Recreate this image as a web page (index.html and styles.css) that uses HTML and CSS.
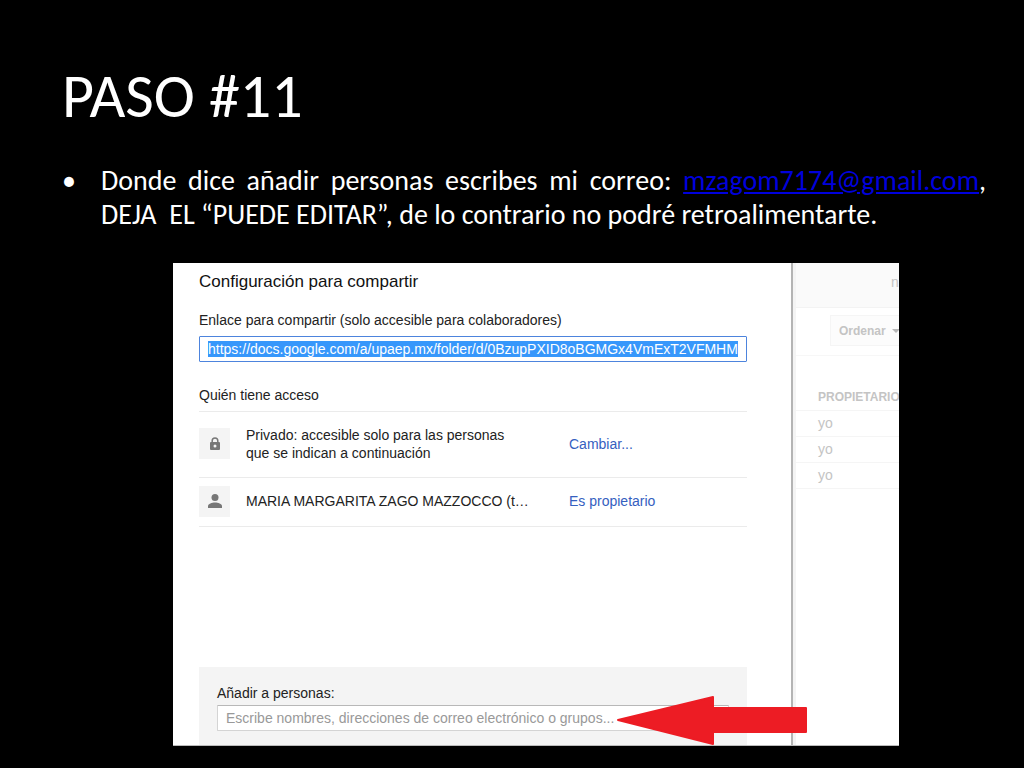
FILE: index.html
```html
<!DOCTYPE html>
<html lang="es">
<head>
  <meta charset="UTF-8">
  <meta name="viewport" content="width=device-width, initial-scale=1.0">
  <title>Paso #11</title>
  <link rel="stylesheet" href="styles.css">
</head>
<body>
  <main class="slide">
    <h1 class="slide-title">PASO #11</h1>
    <ul class="steps">
      <li>
        <p>Donde dice añadir personas escribes mi correo: <a href="mailto:mzagom7174@gmail.com">mzagom7174@gmail.com</a>, DEJA&nbsp; EL “PUEDE EDITAR”, de lo contrario no podré retroalimentarte.</p>
      </li>
    </ul>

    <div class="capture">
      <section class="dialog">
        <h2>Configuración para compartir</h2>
        <label class="field-label" for="shareLink">Enlace para compartir (solo accesible para colaboradores)</label>
        <input class="share-link" type="text" id="shareLink" value="https://docs.google.com/a/upaep.mx/folder/d/0BzupPXID8oBGMGx4VmExT2VFMHM" readonly>

        <h3>Quién tiene acceso</h3>
        <div class="access-row access-row-tall">
          <span class="icon-box">
            <svg width="12" height="14" viewBox="0 0 12 14">
              <path d="M3.2 6V3.800a2.800 2.800 0 0 1 5.600 0V6" fill="none" stroke="#777" stroke-width="1.500"/>
              <path fill="#777" fill-rule="evenodd" d="M2 5h8a1 1 0 0 1 1 1v6a1 1 0 0 1-1 1H2a1 1 0 0 1-1-1V6a1 1 0 0 1 1-1zm4 2.500a1.500 1.500 0 1 0 0 3 1.500 1.500 0 0 0 0-3z"/>
            </svg>
          </span>
          <span class="access-name">Privado: accesible solo para las personas que se indican a continuación</span>
          <a href="#">Cambiar...</a>
        </div>
        <div class="access-row">
          <span class="icon-box">
            <svg width="14" height="16" viewBox="0 0 14 16">
              <circle cx="7" cy="4.500" r="3.500" fill="#777"/>
              <path fill="#777" d="M0 15v-2c0-2.300 4-3.500 7-3.500s7 1.200 7 3.500v2z"/>
            </svg>
          </span>
          <span class="access-name">MARIA MARGARITA ZAGO MAZZOCCO (t…</span>
          <a href="#">Es propietario</a>
        </div>

        <div class="add-people">
          <label for="people">Añadir a personas:</label>
          <input type="text" id="people" placeholder="Escribe nombres, direcciones de correo electrónico o grupos...">
        </div>
      </section>

      <div class="drive">
        <div class="drive-top">n</div>
        <div class="drive-toolbar">
          <button type="button">Ordenar <span class="caret"></span></button>
        </div>
        <table>
          <thead>
            <tr><th>PROPIETARIO</th></tr>
          </thead>
          <tbody>
            <tr><td>yo</td></tr>
            <tr><td>yo</td></tr>
            <tr><td>yo</td></tr>
          </tbody>
        </table>
      </div>

      <!-- red arrow pointing at the people field -->
      <svg class="arrow" width="192" height="50" viewBox="0 0 192 50">
        <path fill="#ed1c24" stroke="#ed1c24" stroke-width="2" stroke-linejoin="round" d="M2 25L97 2v11h93v24H97v12z"/>
      </svg>
    </div>
  </main>
</body>
</html>
```
FILE: styles.css
```css
* {
  box-sizing: border-box;
}
body {
  margin: 0;
  background: #000;
  color: #fff;
  font-family: Calibri, Carlito, "Open Sans", sans-serif;
}
.slide {
  padding: 56px 38px 22px 62px;
}
.slide-title {
  margin: 0;
  font-size: 62px;
  font-weight: normal;
  line-height: 80px;
}
.steps {
  margin: 28px 0 31px;
  padding: 0;
  font-size: 28px;
  line-height: 34px;
  list-style: none;
}
.steps li {
  display: flex;
}
.steps li::before {
  content: "•";
  flex: 0 0 39px;
}
.steps p {
  margin: 0;
  text-align: justify;
}
.steps a {
  color: #0000dc;
}

/* screenshot area */
.capture {
  position: relative;
  display: flex;
  max-width: 726px;
  min-height: 483px;
  margin-left: 111px;
  overflow: hidden;
  background: #fff;
  border-bottom: 1px solid #bbb;
  color: #222;
  font-family: "Liberation Sans", Arial, sans-serif;
  font-size: 14px;
  line-height: 18px;
}
.dialog {
  flex: 1;
  display: flex;
  flex-direction: column;
  padding: 9px 44px 0 26px;
  border-right: 2px solid #b4b4b4;
}
.dialog h2 {
  margin: 0 0 19px;
  color: #111;
  font-size: 17px;
  font-weight: normal;
  line-height: 20px;
}
.dialog h3 {
  margin: 24px 0 0;
  padding-bottom: 7px;
  border-bottom: 1px solid #ebebeb;
  font-size: 14px;
  font-weight: normal;
}
.field-label {
  margin-bottom: 7px;
}
input {
  width: 100%;
  height: 26px;
  border-radius: 1px;
  font-family: inherit;
  font-size: 14px;
}
.share-link {
  padding: 4px 8px;
  border: 1px solid #4d84dd;
  background: #3797fb content-box;
  color: #fff;
}
.access-row {
  display: flex;
  align-items: center;
  height: 49px;
  padding-bottom: 2px;
  border-bottom: 1px solid #ebebeb;
}
.access-row-tall {
  height: 66px;
}
.icon-box {
  display: flex;
  align-items: center;
  justify-content: center;
  width: 31px;
  height: 31px;
  margin-right: 16px;
  background: #f4f4f4;
}
.access-name {
  width: 284px;
  margin-right: 39px;
}
.access-row a {
  color: #3560bf;
  text-decoration: none;
}
.add-people {
  margin-top: auto;
  padding: 17px 18px 14px;
  background: #f4f4f4;
}
.add-people label {
  display: block;
  margin-bottom: 3px;
}
.add-people input {
  padding: 0 8px;
  border: 1px solid #d4d4d4;
  border-top-color: #b8b8b8;
  background: #fff;
}
.add-people input::placeholder {
  color: #999;
}

/* faded file list behind the dialog */
.drive {
  flex: 0 0 106px;
  overflow: hidden;
  border-left: 3px solid #f4f4f4;
  color: #c4c4c4;
}
.drive-top {
  height: 45px;
  padding: 10px 0 0 95px;
  background: #fafafa;
  border-bottom: 1px solid #f3f3f3;
}
.drive-toolbar {
  height: 48px;
  padding: 7px 0 0 34px;
  border-bottom: 1px solid #f7f7f7;
}
.drive button {
  display: flex;
  align-items: center;
  gap: 6px;
  width: 86px;
  height: 31px;
  padding: 0 8px;
  background: #fcfcfc;
  border: 1px solid #f5f5f5;
  color: #c4c4c4;
  font-family: inherit;
  font-size: 12px;
  font-weight: bold;
}
.caret {
  border: 4px solid transparent;
  border-top-color: #b8b8b8;
  border-bottom: 0;
}
.drive table {
  width: 100%;
  margin-top: 28px;
  border-collapse: collapse;
}
.drive th,
.drive td {
  height: 26px;
  padding: 0 0 0 22px;
  border-bottom: 1px solid #f5f5f5;
  text-align: left;
}
.drive th {
  font-size: 12px;
}

.arrow {
  position: absolute;
  right: 91px;
  bottom: 0;
}
```
